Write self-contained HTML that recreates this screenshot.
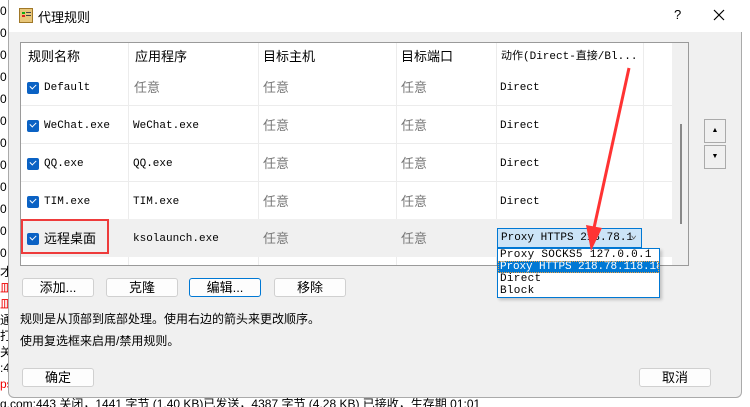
<!DOCTYPE html>
<html><head><meta charset="utf-8"><style>
*{margin:0;padding:0;box-sizing:border-box}
body{width:750px;height:407px;overflow:hidden;background:#fff;position:relative;font-family:"Liberation Sans","Noto Sans CJK SC",sans-serif;font-size:12px;color:#000}
.a{position:absolute}
.mono{font-family:"Liberation Mono","Noto Sans CJK SC",monospace;font-size:11px}
.bg{position:absolute;left:0;top:0;width:9px;height:407px;background:#fff;font-size:12px;line-height:22px;overflow:hidden}
#dlg{position:absolute;left:8px;top:0;width:734px;height:398px;background:#f0f0f0;border:1px solid #aaa;border-top:none;border-radius:0 0 6px 6px}
#title{position:absolute;left:0;top:0;width:733px;height:32px;background:#fff}
.cell{position:absolute;height:38px;line-height:38px;white-space:nowrap}
.g{color:#777;font-size:13px}
.cb{position:absolute;width:12px;height:12px;background:#0b62c4;border-radius:2px}
.cb:after{content:"";position:absolute;left:3px;top:2px;width:5px;height:3px;border-left:1px solid #fff;border-bottom:1px solid #fff;transform:rotate(-45deg)}
.btn{position:absolute;height:19px;background:#fdfdfd;border:1px solid #d0d0d0;border-radius:3px;text-align:center;line-height:17px;font-size:13px}
.vl{position:absolute;width:1px;background:#ececec}
.hl{position:absolute;height:1px;background:#ececec}
.dd div{white-space:nowrap;height:12px;padding-left:2px;font-size:11px;letter-spacing:0.3px}
.r{position:absolute;left:0;top:2px;width:734px;height:398px}
</style></head><body>
<div class="bg"><div style="color:#000">0<br>0<br>0<br>0<br>0<br>0<br>0<br>0<br>0<br>0<br>0<br>0<br></div></div>
<div class="a" style="left:0;top:264px;width:9px;height:140px;line-height:16px;font-size:12px;overflow:hidden"><span>才</span><br><span style="color:#e00">皿</span><br><span style="color:#e00">皿</span><br>通<br>打<br>关<br>:4<br><span style="color:#e00">ps</span></div>
<div class="a" style="left:0;top:396px;width:750px;height:11px;background:#fff;overflow:hidden;font-size:12px;line-height:12px;white-space:nowrap" ><span style="position:relative;top:2px">q.com:443 关闭，1441 字节 (1.40 KB)已发送，4387 字节 (4.28 KB) 已接收，生存期 01:01</span></div>
<div id="dlg">
<div id="title">
 <div class="a" style="left:10px;top:8px;width:14px;height:15px;background:#e8c679;border:1px solid #a07828"><div style="position:absolute;left:2px;top:3px;width:3px;height:2px;background:#1a1"></div><div style="position:absolute;left:2px;top:6px;width:3px;height:2px;background:#d22"></div><div style="position:absolute;left:6px;top:3px;width:5px;height:1px;background:#444"></div><div style="position:absolute;left:6px;top:6px;width:5px;height:1px;background:#444"></div></div>
 <div class="a" style="left:29px;top:7px;font-size:13px">代理规则</div>
 <div class="a" style="left:665px;top:7px;font-size:13px">?</div>
 <svg class="a" style="left:704px;top:9px" width="12" height="12"><path d="M1 1L11 11M11 1L1 11" stroke="#000" stroke-width="1.2"/></svg>
</div>
<div class="a" style="left:11px;top:42px;width:669px;height:224px;background:#fff;border:1px solid #9a9a9a;overflow:hidden">
 <div class="a" style="left:651px;top:0;width:17px;height:224px;background:#f0f0f0"></div>
 <div class="a" style="left:659px;top:81px;width:2px;height:100px;background:#888"></div>
 <div class="vl" style="left:107px;top:0;height:224px"></div>
 <div class="vl" style="left:237px;top:0;height:224px"></div>
 <div class="vl" style="left:375px;top:0;height:224px"></div>
 <div class="vl" style="left:475px;top:0;height:224px"></div>
 <div class="vl" style="left:622px;top:0;height:224px"></div>
 <div class="hl" style="left:0;top:62px;width:651px"></div>
 <div class="hl" style="left:0;top:100px;width:651px"></div>
 <div class="hl" style="left:0;top:138px;width:651px"></div>
 <div class="a" style="left:0;top:176px;width:651px;height:38px;background:#f0f0f0"></div>
 <div class="a" style="left:7px;top:1px;height:26px;line-height:26px;font-size:13px">规则名称</div>
 <div class="a" style="left:114px;top:1px;height:26px;line-height:26px;font-size:13px">应用程序</div>
 <div class="a" style="left:242px;top:1px;height:26px;line-height:26px;font-size:13px">目标主机</div>
 <div class="a" style="left:380px;top:1px;height:26px;line-height:26px;font-size:13px">目标端口</div>
 <div class="a mono" style="left:480px;top:1px;height:26px;line-height:26px">动作(Direct-直接/Bl...</div>
</div>
<div class="r">
<div class="cb" style="left:18px;top:80px"></div><div class="cell mono" style="left:35px;top:67px">Default</div><div class="cell g" style="left:125px;top:67px">任意</div><div class="cell g" style="left:254px;top:67px">任意</div><div class="cell g" style="left:392px;top:67px">任意</div><div class="cell mono" style="left:491px;top:67px">Direct</div>
<div class="cb" style="left:18px;top:118px"></div><div class="cell mono" style="left:35px;top:105px">WeChat.exe</div><div class="cell mono" style="left:124px;top:105px">WeChat.exe</div><div class="cell g" style="left:254px;top:105px">任意</div><div class="cell g" style="left:392px;top:105px">任意</div><div class="cell mono" style="left:491px;top:105px">Direct</div>
<div class="cb" style="left:18px;top:156px"></div><div class="cell mono" style="left:35px;top:143px">QQ.exe</div><div class="cell mono" style="left:124px;top:143px">QQ.exe</div><div class="cell g" style="left:254px;top:143px">任意</div><div class="cell g" style="left:392px;top:143px">任意</div><div class="cell mono" style="left:491px;top:143px">Direct</div>
<div class="cb" style="left:18px;top:194px"></div><div class="cell mono" style="left:35px;top:181px">TIM.exe</div><div class="cell mono" style="left:124px;top:181px">TIM.exe</div><div class="cell g" style="left:254px;top:181px">任意</div><div class="cell g" style="left:392px;top:181px">任意</div><div class="cell mono" style="left:491px;top:181px">Direct</div>
<div class="cb" style="left:18px;top:231px"></div><div class="cell" style="left:35px;top:218px;font-size:13px">远程桌面</div><div class="cell mono" style="left:124px;top:218px">ksolaunch.exe</div><div class="cell g" style="left:254px;top:218px">任意</div><div class="cell g" style="left:392px;top:218px">任意</div>
</div>
<div class="a" style="left:12px;top:219px;width:88px;height:35px;border:2px solid #ee3b3b"></div>
<div class="a mono" style="left:488px;top:228px;width:145px;height:20px;background:#cce4f7;border:1px solid #0078d4;line-height:18px;padding-left:3px;white-space:nowrap;overflow:hidden">Proxy HTTPS 218.78.1<span style="position:absolute;right:4px;top:-2px;color:#555">⌄</span></div>
<div class="a mono dd" style="left:488px;top:248px;width:163px;height:50px;background:#fff;border:1px solid #0078d4;line-height:12px;box-shadow:2px 2px 3px rgba(0,0,0,.2);overflow:hidden">
 <div>Proxy SOCKS5 127.0.0.1</div>
 <div style="background:#0078d4;color:#fff;outline:1px dotted #f0a040;outline-offset:-1px;letter-spacing:-0.1px">Proxy HTTPS 218.78.118.189</div>
 <div>Direct</div>
 <div>Block</div>
</div>
<svg class="a" style="left:0;top:0" width="734" height="398"><line x1="620" y1="68" x2="585" y2="228" stroke="#f33" stroke-width="3"/><polygon points="577,225 593,228 582,251" fill="#f33"/></svg>
<div class="a" style="left:695px;top:119px;width:22px;height:24px;border:1px solid #aaa;background:#f0f0f0;text-align:center;line-height:22px;font-size:7px">▲</div>
<div class="a" style="left:695px;top:145px;width:22px;height:24px;border:1px solid #aaa;background:#f0f0f0;text-align:center;line-height:22px;font-size:7px">▼</div>
<div class="btn" style="left:13px;top:278px;width:72px">添加...</div>
<div class="btn" style="left:97px;top:278px;width:72px">克隆</div>
<div class="btn" style="left:180px;top:278px;width:72px;border-color:#0078d4">编辑...</div>
<div class="btn" style="left:265px;top:278px;width:72px">移除</div>
<div class="a" style="left:11px;top:310px;font-size:12px">规则是从顶部到底部处理。使用右边的箭头来更改顺序。</div>
<div class="a" style="left:11px;top:332px;font-size:12px">使用复选框来启用/禁用规则。</div>
<div class="btn" style="left:13px;top:368px;width:72px">确定</div>
<div class="btn" style="left:630px;top:368px;width:72px">取消</div>
</div>
</body></html>
